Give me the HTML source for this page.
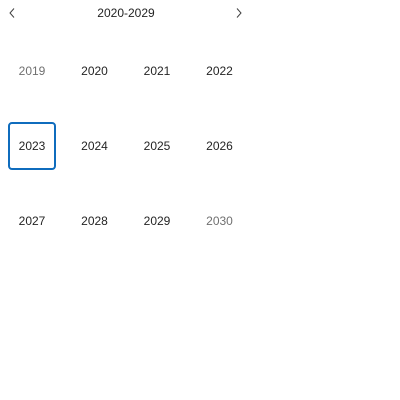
<!DOCTYPE html>
<html><head><style>
body{margin:0;width:400px;height:400px;background:#fff;font-family:"Liberation Sans",sans-serif;font-size:12px;color:#242424;position:relative}
.t{position:absolute;line-height:14px;transform:translate(-50%,-50%);white-space:nowrap}
.g{color:#707070}
.sel{position:absolute;left:8px;top:122px;width:44px;height:44px;border:2px solid #0f6cbd;border-radius:4px}
svg{position:absolute}
</style></head><body>
<svg style="left:8px;top:7px" width="8" height="12" viewBox="0 0 8 12"><path d="M6 1.5L2 6l4 4.5" fill="none" stroke="#424242" stroke-width="1"/></svg>
<svg style="left:235px;top:7px" width="8" height="12" viewBox="0 0 8 12"><path d="M2 1.5L6 6l-4 4.5" fill="none" stroke="#424242" stroke-width="1"/></svg>
<div class="t" style="left:126px;top:13px">2020-2029</div>
<div class="sel"></div>
<div class="t g" style="left:32px;top:71px">2019</div>
<div class="t" style="left:94.5px;top:71px">2020</div>
<div class="t" style="left:157px;top:71px">2021</div>
<div class="t" style="left:219.5px;top:71px">2022</div>
<div class="t" style="left:32px;top:146px">2023</div>
<div class="t" style="left:94.5px;top:146px">2024</div>
<div class="t" style="left:157px;top:146px">2025</div>
<div class="t" style="left:219.5px;top:146px">2026</div>
<div class="t" style="left:32px;top:221px">2027</div>
<div class="t" style="left:94.5px;top:221px">2028</div>
<div class="t" style="left:157px;top:221px">2029</div>
<div class="t g" style="left:219.5px;top:221px">2030</div>
</body></html>
